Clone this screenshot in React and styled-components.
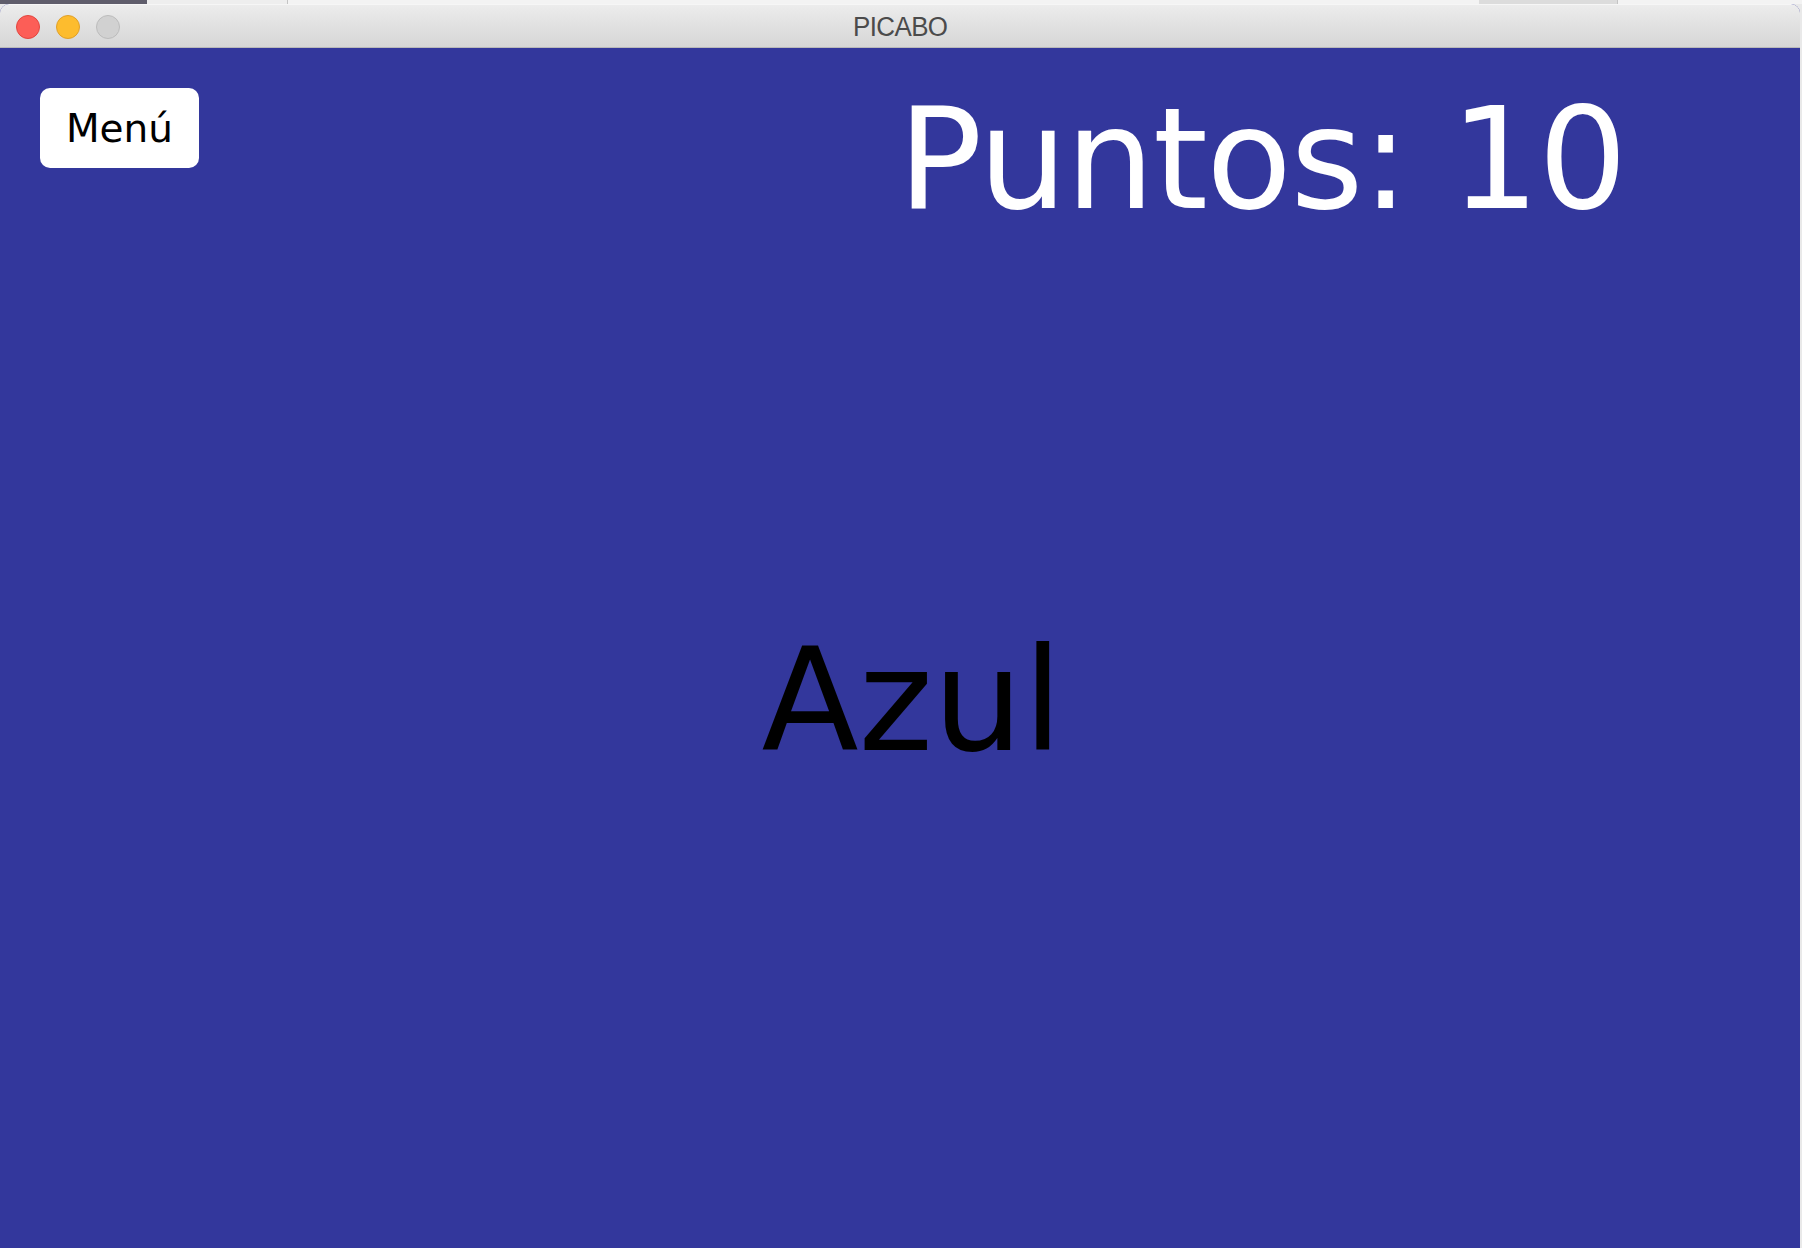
import styled, { createGlobalStyle } from "styled-components";

const GlobalStyle = createGlobalStyle`
  html, body {
    margin: 0;
    padding: 0;
    background: #ebebeb;
  }
  body {
    font-family: "DejaVu Sans", "Noto Sans", sans-serif;
  }
`;

const Desktop = styled.div`
  width: 1802px;
  height: 1248px;
  overflow: hidden;
  display: flex;
  flex-direction: column;
  background: #e9e9e9;
`;

const DesktopStrip = styled.div`
  height: 4px;
  display: flex;
  flex-shrink: 0;
`;

const StripPart = styled.div`
  width: ${(p) => p.$w}px;
  flex: ${(p) => (p.$grow ? 1 : "none")};
  background: ${(p) => p.$bg};
  border-right: ${(p) => (p.$edge ? "1px solid #c4c4c4" : "none")};
`;

const Window = styled.div`
  width: 1800px;
  flex: 1;
  display: flex;
  flex-direction: column;
  border-radius: 9px 9px 0 0;
  overflow: hidden;
  background: #33379c;
`;

const TitleBar = styled.div`
  height: 44px;
  flex-shrink: 0;
  display: grid;
  grid-template-columns: 1fr auto 1fr;
  align-items: center;
  padding: 0 16px;
  background: linear-gradient(#ececec, #d6d6d6);
  border-bottom: 1px solid #b9b9b9;
  border-top: 1px solid #f6f6f6;
  box-sizing: border-box;
`;

const Lights = styled.div`
  display: flex;
  gap: 16px;
  align-items: center;
  margin-top: 1px;
`;

const Light = styled.span`
  width: 24px;
  height: 24px;
  border-radius: 50%;
  box-sizing: border-box;
  background: ${(p) => p.$fill};
  border: 1px solid ${(p) => p.$ring};
`;

const WindowTitle = styled.div`
  font-family: "Liberation Sans", Arial, sans-serif;
  font-size: 27px;
  letter-spacing: -0.6px;
  color: #4b4b4b;
  margin-top: 2px;
  transform: scaleX(0.96);
`;

const Content = styled.main`
  flex: 1;
  display: flex;
  flex-direction: column;
  padding-top: 40px;
`;

const HeaderRow = styled.div`
  display: grid;
  grid-template-columns: 1fr 1fr;
  align-items: start;
`;

const MenuButton = styled.button`
  justify-self: start;
  margin-left: 40px;
  width: 159px;
  height: 80px;
  border: none;
  border-radius: 10px;
  background: #ffffff;
  color: #000000;
  font-family: "DejaVu Sans", "Noto Sans", sans-serif;
  font-size: 39px;
  line-height: 1;
  padding: 0;
  cursor: pointer;
`;

const Score = styled.div`
  margin-top: 2px;
  margin-left: -2px;
  font-size: 140px;
  letter-spacing: -1.5px;
  line-height: 1;
  color: #ffffff;
  white-space: nowrap;
`;

const Stage = styled.div`
  display: flex;
  justify-content: center;
  padding-top: 400px;
  padding-left: 24px;
`;

const ColorWord = styled.div`
  font-size: 142px;
  line-height: 1;
  color: #000000;
`;

export default function App() {
  return (
    <>
      <GlobalStyle />
      <Desktop>
        <DesktopStrip>
          <StripPart $w={147} $bg="#5f5d6b" />
          <StripPart $w={140} $bg="#eeeeee" $edge />
          <StripPart $w={1191} $bg="#f3f3f3" />
          <StripPart $w={138} $bg="#dcdcdc" $edge />
          <StripPart $grow $bg="#f3f3f3" />
        </DesktopStrip>
        <Window>
          <TitleBar>
            <Lights>
              <Light $fill="#fc5e57" $ring="#e2463f" />
              <Light $fill="#fdbc2e" $ring="#e0a02a" />
              <Light $fill="#d1d1d1" $ring="#bcbcbc" />
            </Lights>
            <WindowTitle>PICABO</WindowTitle>
            <span />
          </TitleBar>
          <Content>
            <HeaderRow>
              <MenuButton>Menú</MenuButton>
              <Score>Puntos: 10</Score>
            </HeaderRow>
            <Stage>
              <ColorWord>Azul</ColorWord>
            </Stage>
          </Content>
        </Window>
      </Desktop>
    </>
  );
}
